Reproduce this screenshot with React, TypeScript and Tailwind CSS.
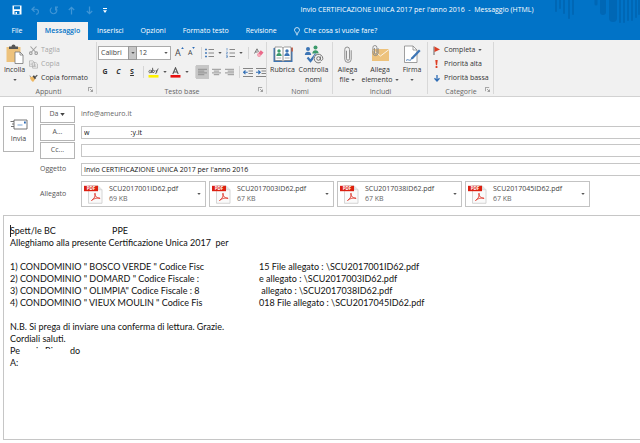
import React from "react";

const ui = "font-['Open_Sans','Noto_Sans',sans-serif]";

function Caret({ className = "" }: { className?: string }) {
  return (
    <svg viewBox="0 0 5 3" className={`h-[2px] w-1 shrink-0 ${className}`} aria-hidden="true">
      <path d="M0 0h5L2.5 3z" fill="#555" />
    </svg>
  );
}

function Launcher({ label }: { label: string }) {
  return (
    <button aria-label={label} className="absolute right-1 bottom-1">
      <svg viewBox="0 0 6 6" className="h-[5px] w-[5px]" fill="none" stroke="#777" strokeWidth="0.8">
        <path d="M0.5 5V0.5H5M2.5 2.5L5.2 5.2M5.4 3v2.4H3" />
      </svg>
    </button>
  );
}

function Group({ name, width, launcher, children }: { name: string; width: string; launcher?: boolean; children: React.ReactNode }) {
  return (
    <section aria-label={name} className={`relative flex h-full shrink-0 flex-col ${width}`}>
      <div className="flex h-[47px] items-start pt-[3px]">{children}</div>
      <div className="text-center text-[7px] leading-[9px] text-[#666]">{name}</div>
      {launcher && <Launcher label={`Opzioni ${name}`} />}
      <span className="absolute top-[2px] right-0 bottom-[2px] w-px bg-[#d8d8d8]" />
    </section>
  );
}

function BigButton({ icon, lines, caret, width }: { icon: React.ReactNode; lines: string[]; caret?: boolean; width: string }) {
  return (
    <button className={`flex shrink-0 flex-col items-center text-[7px] leading-[10px] whitespace-nowrap text-[#333] ${width}`}>
      <span className="flex h-[22px] items-center">{icon}</span>
      <span>{lines[0]}</span>
      <span className="flex h-[9px] items-center gap-[2px]">
        {lines[1]}
        {caret && <Caret />}
      </span>
    </button>
  );
}

function SmallButton({ icon, label, caret, disabled }: { icon: React.ReactNode; label: string; caret?: boolean; disabled?: boolean }) {
  return (
    <button disabled={disabled} className={`flex h-[14px] items-center gap-[3px] text-[7px] whitespace-nowrap ${disabled ? "text-[#a6a6a6]" : "text-[#333]"}`}>
      <span className="flex w-[9px] justify-center">{icon}</span>
      {label}
      {caret && <Caret />}
    </button>
  );
}

function Sep() {
  return <span className="block h-3 w-px shrink-0 bg-[#d5d5d5]" />;
}

function ParagraphIcon({ kind }: { kind: "left" | "center" | "right" }) {
  const d = {
    left: "M0 1h10M0 3h7M0 5h10M0 7h7",
    center: "M0 1h10M2 3h6M0 5h10M2 7h6",
    right: "M0 1h10M3 3h7M0 5h10M3 7h7",
  }[kind];
  return (
    <svg viewBox="0 0 10 8" className="h-2 w-[9px]" stroke="#8a8a8a" strokeWidth="1">
      <path d={d} />
    </svg>
  );
}

function ListIcon({ numbered }: { numbered?: boolean }) {
  return (
    <svg viewBox="0 0 9 10" className="h-[10px] w-[9px]" fill="none">
      <path d="M3.5 1.5H9M3.5 5H9M3.5 8.5H9" stroke="#888" />
      {numbered ? (
        <path d="M1 0v2.5M0.3 4h1v1l-1 1h1.2M0.3 7.5h1v2h-1M0.5 8.5h1" stroke="#4a7ebb" strokeWidth="0.7" />
      ) : (
        <path d="M0 1.5h2M0 5h2M0 8.5h2" stroke="#4a7ebb" strokeWidth="1.6" />
      )}
    </svg>
  );
}

function IndentIcon({ increase }: { increase?: boolean }) {
  return (
    <svg viewBox="0 0 10 9" className="h-[9px] w-[10px]" fill="none">
      <path d="M0 0.5h10M5.5 3h4.5M5.5 5.5h4.5M0 8.5h10" stroke="#777" strokeWidth="0.9" />
      <path d={increase ? "M0 4.3h4M2.3 2.5l2 1.8-2 1.8" : "M0.7 4.3h4M2.5 2.5l-2 1.8 2 1.8"} stroke="#2f6db5" strokeWidth="1.1" />
    </svg>
  );
}

function TextTools() {
  return (
    <div className="flex flex-col pl-px">
      <div className="flex h-5 items-center">
        <div className="relative flex">
          <select aria-label="Tipo di carattere" className="h-[14px] w-[39px] appearance-none border border-[#ababab] bg-white pl-[2px] text-[7px] text-[#444]">
            <option>Calibri</option>
          </select>
          <span className="pointer-events-none absolute top-0 right-0 flex h-[14px] w-[9px] items-center justify-center border border-[#999] bg-[#c6c6c6]">
            <Caret />
          </span>
        </div>
        <div className="relative flex">
          <select aria-label="Dimensione carattere" className="h-[14px] w-[34px] appearance-none border border-l-0 border-[#ababab] bg-white pl-[2px] text-[7px] text-[#444]">
            <option>12</option>
          </select>
          <Caret className="pointer-events-none absolute top-[6px] right-[3px]" />
        </div>
        <button aria-label="Aumenta dimensione" className="ml-1 flex w-[13px] text-[9px] leading-3 text-[#444]">
          A<svg viewBox="0 0 4 3" className="h-[2px] w-[3px]"><path d="M0 3L2 0l2 3z" fill="#2f6db5" /></svg>
        </button>
        <button aria-label="Riduci dimensione" className="flex w-[9px] items-start text-[7px] leading-3 text-[#444]">
          A<svg viewBox="0 0 4 3" className="h-[2px] w-[3px]"><path d="M0 0h4L2 3z" fill="#2f6db5" /></svg>
        </button>
        <span className="pl-1"><Sep /></span>
        <button aria-label="Elenco puntato" className="ml-[3px] flex items-center gap-1"><ListIcon /><Caret /></button>
        <button aria-label="Elenco numerato" className="ml-1 flex items-center gap-1"><ListIcon numbered /><Caret /></button>
        <span className="px-[5px]"><Sep /></span>
        <button aria-label="Cancella formattazione">
          <svg viewBox="0 0 10 10" className="h-[10px] w-[10px]">
            <path d="M0.5 5.5L3 0.8l1.5 3M1.3 4h2.4" stroke="#777" fill="none" />
            <path d="M3 6.5L6.8 2.2l2.7 2.3-3.6 4.3-1.6.2z" fill="#ea6a8a" />
            <path d="M3 6.5l1.4-1.6 2.7 2.4-1.2 1.5-1.6.2z" fill="#f6a9b9" />
          </svg>
        </button>
      </div>
      <div className="flex h-[18px] items-center">
        <button aria-label="Grassetto" className="w-[14px] text-center text-[7px] font-bold text-[#333]">G</button>
        <button aria-label="Corsivo" className="w-[13px] text-center text-[7px] font-bold text-[#333] italic">C</button>
        <button aria-label="Sottolineato" className="w-[14px] text-center text-[7px] font-bold text-[#333] underline">S</button>
        <span className="px-1"><Sep /></span>
        <button aria-label="Evidenziatore" className="flex items-center gap-1">
          <svg viewBox="0 0 11 11" className="h-[11px] w-[11px]" fill="none">
            <path d="M2.6 3.2c-2-.3-2.3 2.6-.6 2.6 1 0 1.4-1.5 1.4-2.5V6M4.6 0.8V5.8M4.8 3.5c2-1 2.7 2 .2 2.2M8 3l.8 2.4M10.2 1.5L7.6 7" stroke="#555" strokeWidth="0.9" />
            <path d="M0.5 8h10v2.6h-10z" fill="#fff200" />
          </svg>
          <Caret />
        </button>
        <button aria-label="Colore carattere" className="ml-[3px] flex items-center gap-1">
          <svg viewBox="0 0 11 11" className="h-[11px] w-[11px]" fill="none">
            <path d="M2.8 7L5.5 0.8 8.2 7M3.7 5h3.6" stroke="#555" strokeWidth="1.1" />
            <path d="M0.5 8h10v2.6h-10z" fill="#e81010" />
          </svg>
          <Caret />
        </button>
        <span className="pl-[6px]"><Sep /></span>
        <button aria-label="Allinea a sinistra" className="flex h-[14px] w-[13px] items-center justify-center bg-[#c6c6c6]"><ParagraphIcon kind="left" /></button>
        <button aria-label="Centra" className="flex w-[14px] justify-center"><ParagraphIcon kind="center" /></button>
        <button aria-label="Allinea a destra" className="flex w-[13px] justify-center"><ParagraphIcon kind="right" /></button>
        <span className="px-[3px]"><Sep /></span>
        <button aria-label="Riduci rientro"><IndentIcon /></button>
        <button aria-label="Aumenta rientro" className="ml-[3px]"><IndentIcon increase /></button>
      </div>
    </div>
  );
}

function Header() {
  const tabs = ["Inserisci", "Opzioni", "Formato testo", "Revisione"];
  return (
    <header className="relative bg-[#0173c7] text-white">
      <svg viewBox="0 0 90 24" className="absolute top-0 right-0 h-6 w-[90px]" stroke="#0067b5" strokeLinecap="round" aria-hidden="true">
        <path d="M6 0v11M10 0v8M14 0v13M19 0v18M23 0v14" strokeWidth="2" />
        <path d="M46 0v4" strokeWidth="3" />
        <path d="M53 0v12" strokeWidth="6" />
        <path d="M63 0v18" strokeWidth="8" />
        <path d="M70 0v22M74 0v22M78 0v20M82 0v20M86 0v17M89 0v14" strokeWidth="2" />
      </svg>
      <div className="relative flex h-5 items-center pl-3">
        <div className="flex items-center gap-[9px]">
          <button aria-label="Salva">
            <svg viewBox="0 0 10 10" className="h-[10px] w-[10px]">
              <path d="M0.5 0.5h9v9h-9z" fill="#fff" />
              <path d="M2 1.2h6v3H2zM2.5 6h5v3h-5z" fill="#0173c7" />
              <path d="M3.5 7h1.5v2H3.5z" fill="#fff" />
            </svg>
          </button>
          <button aria-label="Annulla">
            <svg viewBox="0 0 10 10" className="h-[9px] w-[9px]" fill="none" stroke="#3f95d6" strokeWidth="1.3"><path d="M4 0.8L1 3.6l3 2.8M1 3.6h4.5a2.8 2.8 0 0 1 0 5.6" /></svg>
          </button>
          <button aria-label="Ripeti">
            <svg viewBox="0 0 10 10" className="h-[9px] w-[9px]" fill="none" stroke="#3f95d6" strokeWidth="1.3"><path d="M3 1.8a3.7 3.7 0 1 0 4.5.3M7.3 5V1.3H10" /></svg>
          </button>
          <button aria-label="Elemento precedente">
            <svg viewBox="0 0 10 10" className="h-[9px] w-[9px]" fill="none" stroke="#3f95d6" strokeWidth="1.4"><path d="M5 9.5V1.5M2 4.5l3-3 3 3" /></svg>
          </button>
          <button aria-label="Elemento successivo">
            <svg viewBox="0 0 10 10" className="h-[9px] w-[9px]" fill="none" stroke="#3f95d6" strokeWidth="1.4"><path d="M5 0.5v8M2 5.5l3 3 3-3" /></svg>
          </button>
          <button aria-label="Personalizza barra">
            <svg viewBox="0 0 4 5" className="h-[5px] w-1"><path d="M0 0h4v1H0zM0 2.3h4L2 5z" fill="#fff" /></svg>
          </button>
        </div>
        <h1 className="flex-1 pl-[87px] text-center text-[7px] whitespace-pre">Invio CERTIFICAZIONE UNICA 2017 per l'anno 2016  -  Messaggio (HTML)</h1>
      </div>
      <nav className="relative flex h-5 items-end text-[7px] leading-[18px] whitespace-nowrap">
        <button className="w-[37px] pr-[3px] text-center">File</button>
        <button className="w-[51px] bg-[#f1f1f1] text-center font-semibold text-[#0173c7]">Messaggio</button>
        <div className="flex gap-[17px] pl-[9px]">
          {tabs.map((t) => <button key={t}>{t}</button>)}
          <button className="flex items-center gap-1">
            <svg viewBox="0 0 7 10" className="h-[9px] w-[6px]" fill="none" stroke="#fff" strokeWidth="0.9"><path d="M2.2 7V6C1 5 0.6 4.3 0.6 3.3a2.9 2.9 0 0 1 5.8 0C6.4 4.3 6 5 4.8 6v1zM2.3 8.8h2.4" /></svg>
            Che cosa si vuole fare?
          </button>
        </div>
      </nav>
    </header>
  );
}

function Ribbon() {
  return (
    <div className="flex h-[57px] border-b border-[#d2d2d2] bg-[#f1f1f1]">
      <Group name="Appunti" width="w-[97px]" launcher>
        <BigButton
          width="w-[29px]"
          lines={["Incolla"]}
          caret
          icon={
            <svg viewBox="0 0 18 20" className="h-5 w-[18px]">
              <path d="M0.5 3h14v15h-14z" fill="#edc27c" />
              <path d="M3 2.5h2.5a2 2 0 0 1 4 0H12v2.5H3z" fill="#555" />
              <path d="M9 8h5l3 3v8.5H9z" fill="#fff" stroke="#777" strokeWidth="0.8" />
              <path d="M14 8v3h3" fill="none" stroke="#777" strokeWidth="0.8" />
            </svg>
          }
        />
        <div className="flex flex-col">
          <SmallButton disabled label="Taglia" icon={<svg viewBox="0 0 9 9" className="h-[9px] w-[9px]" fill="none" stroke="#a0a0a0" strokeWidth="1.1"><path d="M1.5 0.5L6.5 6M7.5 0.5L2.5 6" /><circle cx="1.8" cy="7.2" r="1.3" /><circle cx="7.2" cy="7.2" r="1.3" /></svg>} />
          <SmallButton disabled label="Copia" icon={<svg viewBox="0 0 10 9" className="h-[9px] w-[10px]" fill="#f6f6f6" stroke="#aaa" strokeWidth="0.8"><path d="M0.5 0.5h3.8L6 2v4.5H0.5zM4 2.5h3.8L9.5 4v4.5H4zM5.2 5h3M5.2 6.5h3M1.5 3h1.8M1.5 4.7h1.8" /></svg>} />
          <SmallButton label="Copia formato" icon={<svg viewBox="0 0 10 9" className="h-[9px] w-[10px]"><path d="M1 3.5l3.5-1.5L7 5 4.5 8.5C3 7.5 1.5 6 1 3.5z" fill="#edb763" /><path d="M4 2l1.5-1L8 4 6.5 5.3z" fill="#444" /><path d="M6.5 2.2L8.8 0.3l.9 1L7.5 3.4z" fill="#555" /><path d="M0.3 1.2l1.7.5-.4 1.3z" fill="#777" /></svg>} />
        </div>
      </Group>
      <Group name="Testo base" width="w-[170px]" launcher><TextTools /></Group>
      <Group name="Nomi" width="w-[66px]">
        <BigButton
          width="w-[31px]"
          lines={["Rubrica"]}
          icon={
            <svg viewBox="0 0 20 17" className="h-[17px] w-5">
              <path d="M0.5 2v14h19V2" fill="#3d75b5" />
              <path d="M2 1h6.5l1.5 1 1.5-1H18v13.5h-6.5l-1.5 1-1.5-1H2z" fill="#fff" stroke="#777" strokeWidth="0.7" />
              <path d="M10 2v13" stroke="#777" strokeWidth="0.8" />
              <circle cx="6" cy="5" r="1.7" fill="#3c9a6b" /><path d="M3.3 10c0-4 5.4-4 5.4 0z" fill="#3c9a6b" />
              <circle cx="14" cy="5" r="1.7" fill="#3d75b5" /><path d="M11.3 10c0-4 5.4-4 5.4 0z" fill="#3d75b5" />
              <path d="M3.5 12h4.7M11.8 12h4.7" stroke="#999" strokeWidth="0.8" />
              <path d="M18.5 1.5h1.3v4h-1.3z" fill="#d9532c" />
            </svg>
          }
        />
        <BigButton
          width="w-[31px]"
          lines={["Controlla", "nomi"]}
          icon={
            <svg viewBox="0 0 20 19" className="h-[19px] w-5">
              <circle cx="4" cy="4" r="2" fill="#3d75b5" /><path d="M0.8 10c0-4.5 6.4-4.5 6.4 0z" fill="#3d75b5" />
              <circle cx="11.5" cy="2.5" r="2" fill="#3c9a6b" /><path d="M8.3 8.5c0-4.5 6.4-4.5 6.4 0z" fill="#3c9a6b" />
              <path d="M3.5 12.5l3 3.5 5.5-7" stroke="#3d75b5" strokeWidth="2.2" fill="none" />
              <circle cx="14.5" cy="13.5" r="5" fill="#f1f1f1" />
              <path d="M16.4 11.5v3c0 1.5 2.4 1.3 2.4-1a4.3 4.3 0 1 0-2 3.7" stroke="#666" fill="none" strokeWidth="0.9" />
              <circle cx="14.5" cy="13.5" r="1.8" stroke="#666" fill="none" strokeWidth="0.9" />
            </svg>
          }
        />
      </Group>
      <Group name="Includi" width="w-[95px]">
        <BigButton
          width="w-[29px]"
          lines={["Allega", "file"]}
          caret
          icon={
            <svg viewBox="0 0 8 18" className="h-[17px] w-2" fill="none" stroke="#888" strokeWidth="1">
              <path d="M2.4 5v8.5a1.6 1.6 0 0 0 3.2 0V3.6a2.5 2.5 0 0 0-5 0V14a3.3 3.3 0 0 0 6.8 0V4.5" />
            </svg>
          }
        />
        <BigButton
          width="w-[36px]"
          lines={["Allega", "elemento"]}
          caret
          icon={
            <svg viewBox="0 0 18 18" className="h-[18px] w-[18px]" fill="none">
              <path d="M1 4h17v12H1z" fill="#edc27c" />
              <path d="M1 4.5l8.5 6.5L18 4.5" stroke="#fff" strokeWidth="0.8" />
              <path d="M3.5 3v5a1.2 1.2 0 0 0 2.4 0V2.5a2 2 0 0 0-4 0V8a2.6 2.6 0 0 0 5.2 0V3" stroke="#888" strokeWidth="0.9" />
            </svg>
          }
        />
        <BigButton
          width="w-[28px]"
          lines={["Firma"]}
          caret
          icon={
            <svg viewBox="0 0 18 19" className="h-[19px] w-[18px]">
              <path d="M1.5 1h8.5l4 4v12.5H1.5z" fill="#fff" stroke="#888" strokeWidth="0.8" />
              <path d="M10 1v4h4" fill="none" stroke="#888" strokeWidth="0.8" />
              <path d="M16 4.5l1.6 1.5L10 14l-2.5.8.8-2.3z" fill="#3d75b5" />
              <path d="M3 15.5c1.5-2 3 .5 5-.5" fill="none" stroke="#3d75b5" strokeWidth="0.9" />
            </svg>
          }
        />
      </Group>
      <Group name="Categorie" width="w-[66px]" launcher>
        <div className="flex flex-col pl-1">
          <SmallButton label="Completa" caret icon={<svg viewBox="0 0 7 9" className="h-[9px] w-[7px]"><path d="M0.5 0.5h1V9h-1z" fill="#666" /><path d="M1.5 0.5L7 3.5 1.5 6z" fill="#dd3e24" /></svg>} />
          <SmallButton label="Priorità alta" icon={<svg viewBox="0 0 3 8" className="h-2 w-[3px]"><path d="M0.3 0h2.4l-.6 5.2H.9zM.6 6h1.8v2H.6z" fill="#dd3e24" /></svg>} />
          <SmallButton label="Priorità bassa" icon={<svg viewBox="0 0 6 7" className="h-[7px] w-[6px]" fill="none" stroke="#2f6db5" strokeWidth="1.3"><path d="M3 0v6M0.5 3.2L3 6l2.5-2.8" /></svg>} />
        </div>
      </Group>
    </div>
  );
}

function PdfIcon() {
  return (
    <svg viewBox="0 0 19 19" className="h-[19px] w-[19px] shrink-0" aria-hidden="true">
      <path d="M4.5 0.8h9.5l4 4v13.5H4.5z" fill="#fafafa" stroke="#ccc" strokeWidth="0.8" />
      <path d="M14 0.8v4h4" fill="#e6e6e6" stroke="#ccc" strokeWidth="0.6" />
      <path d="M0 0.8h14v5.4H0z" fill="#dc1f10" />
      <text x="7" y="5.2" textAnchor="middle" fontSize="4.5" fontWeight="bold" fill="#fff" fontFamily="Open Sans, sans-serif">PDF</text>
      <path d="M7.5 15.5c3-1.8 4.2-5 3.6-7.3-1.3.2.6 5.3 5 5.2-2-1.3-6.5.3-8.6 2.1z" fill="none" stroke="#e0392c" strokeWidth="0.9" />
    </svg>
  );
}

const files = [
  { name: "SCU2017001ID62.pdf", size: "69 KB" },
  { name: "SCU2017003ID62.pdf", size: "67 KB" },
  { name: "SCU2017038ID62.pdf", size: "67 KB" },
  { name: "SCU2017045ID62.pdf", size: "67 KB" },
];

const fieldClass = "h-[13px] w-full border border-r-0 border-[#c6c6c6] bg-white px-[2px] text-[7px] text-[#111] outline-none";
const fieldButton = "flex h-[17px] w-[35px] shrink-0 items-center justify-center gap-[2px] border border-[#b5b5b5] bg-white text-[7px] text-[#555]";

function Envelope() {
  return (
    <form className="flex gap-[6px] pt-[9px] pl-[3px]">
      <button type="button" className="flex h-[46px] w-[31px] shrink-0 flex-col items-center justify-center gap-1 border border-[#b5b5b5] text-[7px] leading-[10px] text-[#444]">
        <svg viewBox="0 0 18 11" className="mt-1 h-[11px] w-[18px]" fill="none">
          <path d="M4 1h13v9H4z" fill="#fff" stroke="#666" strokeWidth="0.9" />
          <path d="M14 2.5h1.8v2H14z" fill="#2f6db5" />
          <path d="M7.5 6h5" stroke="#7aa7d8" />
          <path d="M0.5 2.5H4M2 5h2M1 7.5h3" stroke="#666" strokeWidth="0.9" />
        </svg>
        Invia
      </button>
      <div className="flex min-w-0 flex-1 flex-col gap-px">
        <div className="flex items-center gap-[6px]">
          <button type="button" className={fieldButton}>
            Da
            <svg viewBox="0 0 6 4" className="h-[3px] w-[5px]"><path d="M0 0h6L3 4z" fill="#444" /></svg>
          </button>
          <span className="text-[7px] text-[#666]">info@ameuro.it</span>
        </div>
        <div className="flex items-center gap-[6px]">
          <button type="button" className={fieldButton}>A...</button>
          <input aria-label="A" className={fieldClass} defaultValue={"w\u2007\u2007\u2007\u2007\u2007\u2007\u2007\u2007\u2007\u2007\u2009:y.it"} />
        </div>
        <div className="flex items-center gap-[6px]">
          <button type="button" className={fieldButton}>Cc...</button>
          <input aria-label="Cc" className={fieldClass} />
        </div>
        <div className="flex h-[18px] items-center gap-[6px]">
          <label htmlFor="oggetto" className="w-[35px] shrink-0 text-[7px] text-[#555]">Oggetto</label>
          <input id="oggetto" className={fieldClass} defaultValue="Invio CERTIFICAZIONE UNICA 2017 per l'anno 2016" />
        </div>
        <div className="flex items-center gap-[6px] pt-[2px]">
          <span className="w-[35px] shrink-0 text-[7px] text-[#555]">Allegato</span>
          <ul className="flex gap-[3px]">
            {files.map((f) => (
              <li key={f.name}>
                <button type="button" className="flex h-[26px] w-[125px] items-center gap-[6px] border border-[#c3c3c3] pr-1 pl-[2px] text-left text-[7px] leading-[10px] text-[#444]">
                  <PdfIcon />
                  <span className="flex-1">
                    {f.name}
                    <span className="block text-[#666]">{f.size}</span>
                  </span>
                  <Caret />
                </button>
              </li>
            ))}
          </ul>
        </div>
      </div>
    </form>
  );
}

function Line({ left, right, leftWidth = "w-[249px]" }: { left: string; right: string; leftWidth?: string }) {
  return (
    <p className="flex">
      <span className={`shrink-0 ${leftWidth}`}>{left}</span>
      <span>{right}</span>
    </p>
  );
}

function Message() {
  return (
    <main
      role="textbox"
      aria-label="Messaggio"
      className="relative mt-2 ml-[3px] flex-1 border border-r-0 border-[#c6c6c6] pt-[9px] pl-[6px] font-['Lato','Open_Sans',sans-serif] text-[9px] leading-3 whitespace-pre text-[#111]"
    >
      <span className="absolute top-[9px] left-[6px] h-3 w-px bg-[#222]" />
      <Line left="Spett/le BC" right="PPE" leftWidth="w-[102px]" />
      <p>Alleghiamo alla presente Certificazione Unica 2017  per</p>
      <p> </p>
      <Line left={'1) CONDOMINIO " BOSCO VERDE " Codice Fisc'} right="15 File allegato : \SCU2017001ID62.pdf" />
      <Line left={'2) CONDOMINIO " DOMARD " Codice Fiscale :'} right="e allegato : \SCU2017003ID62.pdf" />
      <Line left={'3) CONDOMINIO " OLIMPIA" Codice Fiscale : 8'} right=" allegato : \SCU2017038ID62.pdf" />
      <Line left={'4) CONDOMINIO " VIEUX MOULIN " Codice Fis'} right="018 File allegato : \SCU2017045ID62.pdf" />
      <p> </p>
      <p>N.B. Si prega di inviare una conferma di lettura. Grazie.</p>
      <p>Cordiali saluti.</p>
      <p className="relative flex">
        <span className="w-[26px]">Pe</span>
        <span className="w-[34px]">i   Ri</span>
        <span>do</span>
        <span className="absolute top-1 left-[11px] h-2 w-[48px] bg-white" />
      </p>
      <p>A:</p>
    </main>
  );
}

export default function App() {
  return (
    <div className={`flex min-h-screen flex-col overflow-hidden bg-white pb-[3px] ${ui}`}>
      <Header />
      <Ribbon />
      <Envelope />
      <Message />
    </div>
  );
}
